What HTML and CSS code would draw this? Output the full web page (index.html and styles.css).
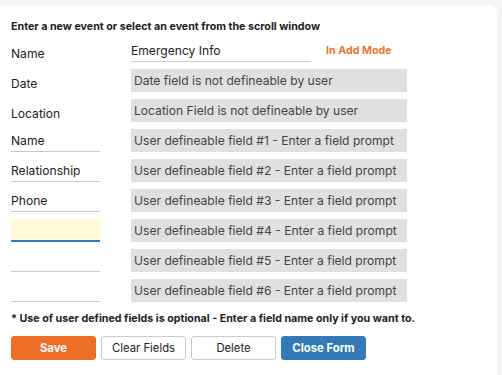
FILE: index.html
```html
<!DOCTYPE html>
<html lang="en">
<head>
  <meta charset="UTF-8">
  <meta name="viewport" content="width=device-width, initial-scale=1.0">
  <title>Emergency Info</title>
  <link rel="stylesheet" href="styles.css">
</head>
<body>
  <div class="card">
    <div class="intro">Enter a new event or select an event from the scroll window</div>

    <div class="fields">
      <div class="label">Name</div>
      <div class="name-row">
        <input type="text" class="title-input" value="Emergency Info">
        <span class="mode">In Add Mode</span>
      </div>

      <div class="label">Date</div>
      <input type="text" class="fixed" value="Date field is not defineable by user" readonly>

      <div class="label">Location</div>
      <input type="text" class="fixed" value="Location Field is not defineable by user" readonly>

      <input type="text" class="prompt" value="Name">
      <input type="text" class="fixed" value="User defineable field #1 - Enter a field prompt" readonly>

      <input type="text" class="prompt" value="Relationship">
      <input type="text" class="fixed" value="User defineable field #2 - Enter a field prompt" readonly>

      <input type="text" class="prompt" value="Phone">
      <input type="text" class="fixed" value="User defineable field #3 - Enter a field prompt" readonly>

      <input type="text" class="prompt active" value="">
      <input type="text" class="fixed" value="User defineable field #4 - Enter a field prompt" readonly>

      <input type="text" class="prompt" value="">
      <input type="text" class="fixed" value="User defineable field #5 - Enter a field prompt" readonly>

      <input type="text" class="prompt" value="">
      <input type="text" class="fixed" value="User defineable field #6 - Enter a field prompt" readonly>
    </div>

    <div class="note">* Use of user defined fields is optional - Enter a field name only if you want to.</div>

    <div class="actions">
      <button class="btn btn-save">Save</button>
      <button class="btn">Clear Fields</button>
      <button class="btn">Delete</button>
      <button class="btn btn-close">Close Form</button>
    </div>
  </div>
</body>
</html>
```

FILE: styles.css
```css
body {
  font-family: Inter, 'Liberation Sans', sans-serif;
  background: #f5f5f5;
  margin: 0;
  padding: 5px 5px 0 0;
  color: #222;
}
.card {
  background: white;
  border-radius: 0 7px 0 0;
  padding: 15px 0 20px 11px;
  min-height: 340px;
}
.intro {
  font-size: 10.7px;
  font-weight: 700;
  line-height: 14px;
  color: #222;
}
.fields {
  display: grid;
  grid-template-columns: 89px 276px;
  grid-auto-rows: 23px;
  column-gap: 31px;
  row-gap: 7px;
  margin-top: 5px;
}
input {
  font-family: inherit;
  box-sizing: border-box;
  margin: 0;
  outline: none;
}
.label {
  font-size: 12.1px;
  line-height: 23px;
  padding-top: 3px;
}
.name-row {
  display: flex;
  align-items: center;
}
.title-input {
  width: 180px;
  height: 23px;
  border: none;
  border-bottom: 1px solid #ccc;
  padding: 1px 0 0;
  font-size: 12.1px;
  color: #222;
}
.mode {
  margin-left: 15px;
  font-size: 10.7px;
  font-weight: 700;
  color: #f07434;
}
.fixed {
  width: 276px;
  height: 23px;
  border: none;
  background: #e0e0e0;
  padding: 0 3px;
  font-size: 12.1px;
  color: #444;
}
.prompt {
  width: 89px;
  height: 23px;
  border: none;
  border-bottom: 1px solid #c8c8c8;
  padding: 1px 0 0;
  font-size: 12.1px;
  color: #222;
  background: white;
}
.prompt.active {
  background: #fffbd6;
  border-bottom: 2px solid #337ab7;
}
.note {
  font-size: 10.7px;
  font-weight: 700;
  line-height: 14px;
  margin-top: 10px;
}
.actions {
  display: flex;
  gap: 5px;
  margin-top: 10px;
}
.btn {
  font-family: inherit;
  width: 85px;
  height: 24px;
  font-size: 11.3px;
  background: white;
  color: #222;
  border: 1px solid #ccc;
  border-radius: 3px;
  cursor: pointer;
}
.btn-save {
  background: #ee6d27;
  border-color: #ee6d27;
  color: white;
  font-weight: 700;
}
.btn-close {
  background: #337ab7;
  border-color: #337ab7;
  color: white;
  font-weight: 700;
}
```
